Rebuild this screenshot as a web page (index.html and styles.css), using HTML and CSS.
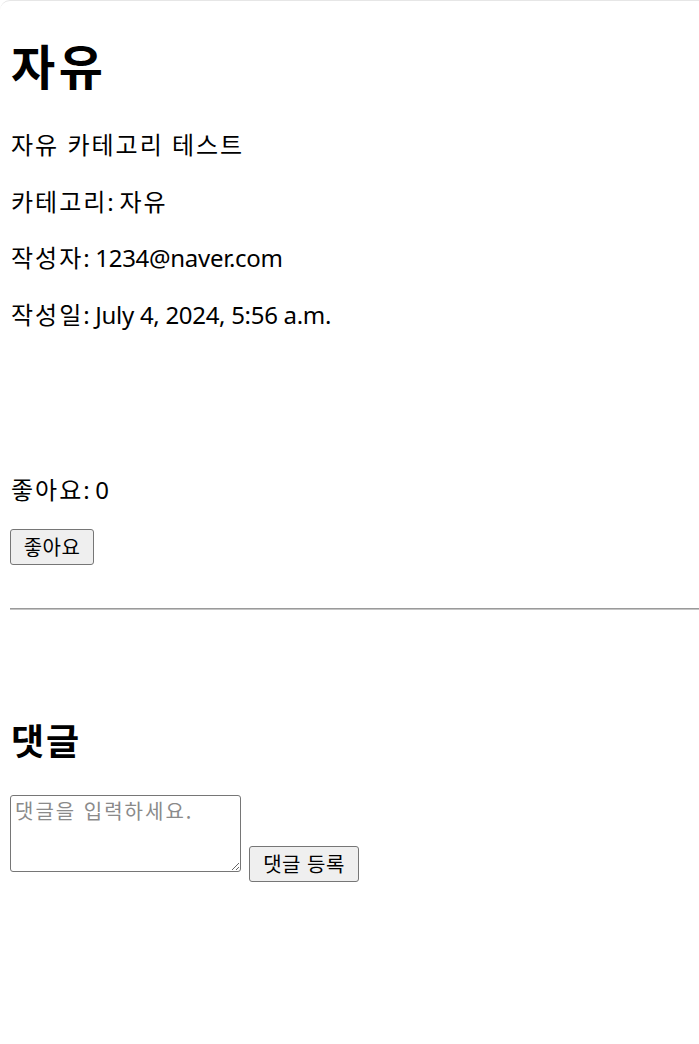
FILE: index.html
```html
<!DOCTYPE html>
<html lang="ko">
<head>
<meta charset="utf-8">
<title>자유</title>
<link rel="stylesheet" href="styles.css">
</head>
<body>
<div class="page">
  <h1 class="title"><span class="ko">자유</span></h1>
  <p class="line"><span class="ko">자유 카테고리 테스트</span></p>
  <p class="line"><span class="ko">카테고리</span>: <span class="ko">자유</span></p>
  <p class="line"><span class="ko">작성자</span>: 1234@naver.com</p>
  <p class="line"><span class="ko">작성일</span>: July 4, 2024, 5:56 a.m.</p>
  <div class="post-body"></div>
  <p class="line likes"><span class="ko">좋아요</span>: 0</p>
  <form class="like-form">
    <button type="button" class="btn btn-like">좋아요</button>
  </form>
  <hr class="divider">
  <h2 class="comments-title"><span class="ko">댓글</span></h2>
  <form class="comment-form">
    <textarea class="comment-input" placeholder="댓글을 입력하세요."></textarea>
    <button type="button" class="btn btn-submit">댓글 등록</button>
  </form>
</div>
</body>
</html>
```
FILE: styles.css
```css
html, body {
  margin: 0;
  padding: 0;
  background: #ffffff;
}

body {
  font-family: "Noto Sans", "Noto Sans CJK KR", sans-serif;
  color: #000000;
  font-size: 24px;
}

.page {
  min-height: 1043px;
  box-sizing: border-box;
  padding: 0 0 0 10px;
  border-top: 1px solid #e6e6e6;
  border-top-left-radius: 10px;
  overflow: hidden;
}

.ko {
  letter-spacing: 2px;
}

.title {
  font-size: 48px;
  font-weight: 700;
  line-height: 64px;
  margin: 34px 0 30px 1px;
}

.title .ko {
  letter-spacing: 3.5px;
}

.line {
  margin: 24px 0 24px 1px;
  line-height: 32.7px;
  letter-spacing: -0.3px;
}

.line .ko {
  letter-spacing: 2px;
}

.post-body {
  height: 94px;
}

.likes {
  margin-bottom: 22.7px;
}

.like-form {
  margin: 0;
  display: flex;
}

.btn {
  font-family: "Noto Sans CJK KR", "Noto Sans", sans-serif;
  font-size: 20px;
  color: #000;
  background: #efefef;
  border: 1px solid #767676;
  border-radius: 3px;
  box-sizing: border-box;
  height: 36px;
  padding: 0;
  line-height: 32px;
  text-align: center;
  letter-spacing: 0.5px;
}

.btn-like {
  width: 84px;
}

.divider {
  margin: 43px -20px 0 0;
  height: 0;
  border: 0;
  border-top: 1px solid #9a9a9a;
  border-bottom: 1px solid #c4c4c4;
}

.comments-title {
  font-size: 36px;
  font-weight: 700;
  line-height: 48px;
  margin: 108px 0 29px 1px;
}

.comment-form {
  margin: 0;
  display: flex;
  align-items: flex-start;
  gap: 8px;
}

.comment-input {
  width: 231px;
  height: 77px;
  box-sizing: border-box;
  border: 1px solid #767676;
  border-radius: 3px;
  padding: 3px 4px;
  font-family: "Noto Sans CJK KR", monospace;
  font-size: 20px;
  line-height: 24px;
  letter-spacing: 2px;
  margin: 0;
  resize: vertical;
}

.comment-input::placeholder {
  color: #8a8a8a;
}

.btn-submit {
  width: 110px;
  margin-top: 51px;
}
```
